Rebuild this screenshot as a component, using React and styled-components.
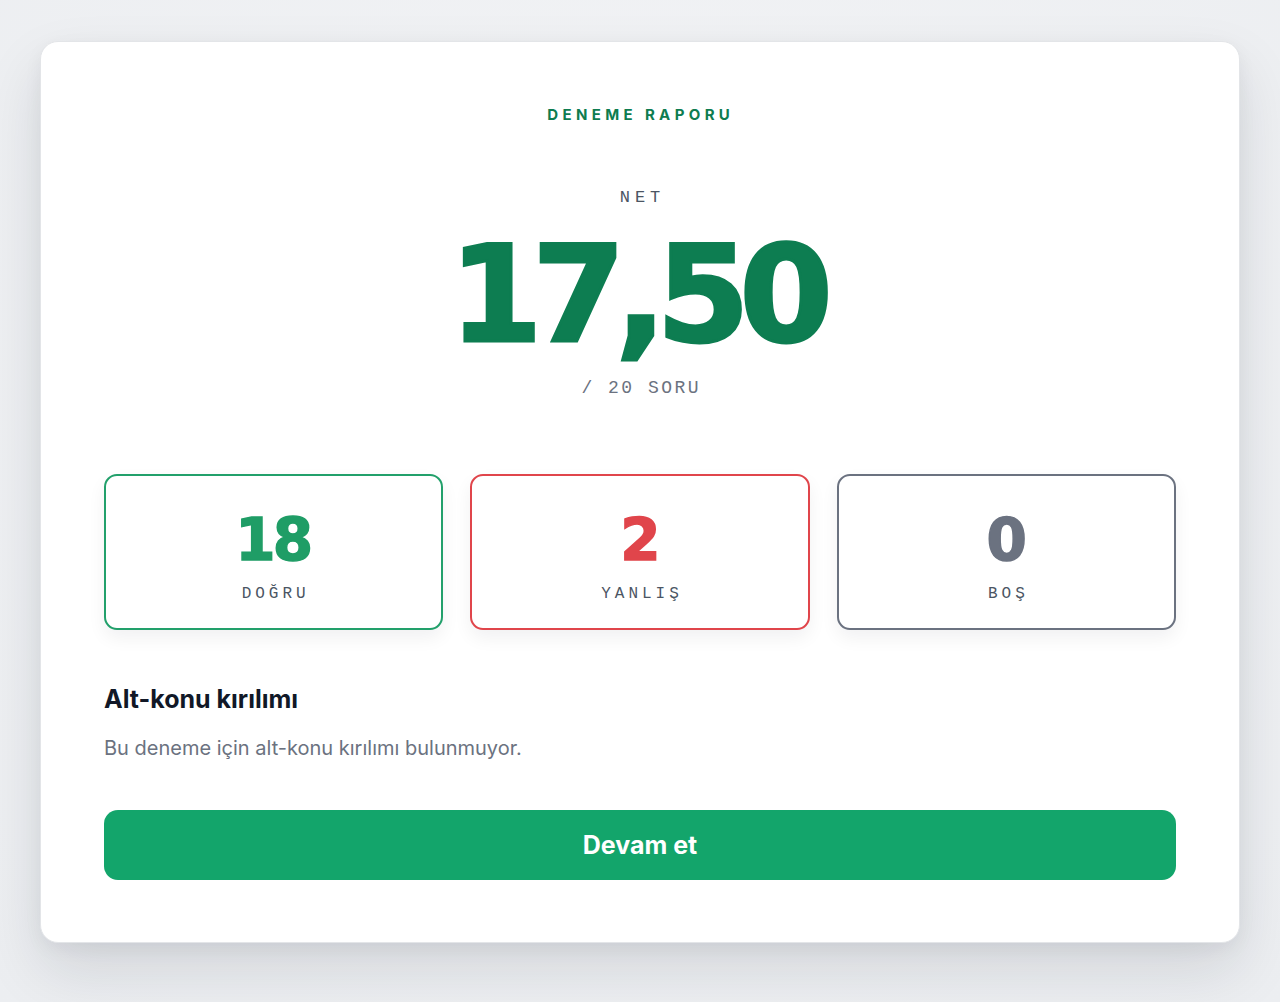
import styled, { createGlobalStyle } from 'styled-components';

const GlobalStyle = createGlobalStyle`
  html, body {
    margin: 0;
    padding: 0;
    background: #eef0f3;
    font-family: Inter, "Noto Sans", sans-serif;
  }
  * { box-sizing: border-box; }
`;

const Page = styled.div`
  min-height: 1002px;
  padding: 41px 40px 59px;
  background: radial-gradient(ellipse at 50% 40%, #f3f4f6 0%, #eceef1 100%);
`;

const Card = styled.div`
  background: #ffffff;
  border-radius: 18px;
  border: 1px solid #e3e5e8;
  box-shadow: 0 28px 60px rgba(17, 24, 39, 0.12), 0 6px 18px rgba(17, 24, 39, 0.05);
  padding: 63px 63px 62px;
  display: flex;
  flex-direction: column;
`;

const Eyebrow = styled.div`
  text-align: center;
  color: #0e7c50;
  font-size: 15px;
  line-height: 20px;
  font-weight: 700;
  letter-spacing: 0.29em;
  margin-right: -0.1em;
`;

const Hero = styled.div`
  display: flex;
  flex-direction: column;
  align-items: center;
  margin-top: 63px;
`;

const MonoLabel = styled.div`
  font-family: "Liberation Mono", "DejaVu Sans Mono", monospace;
  color: ${(p) => p.color || '#4b5563'};
  font-size: ${(p) => p.size || 16}px;
  line-height: ${(p) => p.lh || 20}px;
  letter-spacing: ${(p) => p.spacing || 4}px;
  margin-right: -${(p) => p.spacing || 4}px;
`;

const BigNet = styled.div`
  font-family: "DejaVu Sans", sans-serif;
  font-weight: 700;
  font-size: 134px;
  line-height: 134px;
  letter-spacing: -0.075em;
  margin-right: 8px;
  color: #0d7d51;
  -webkit-text-stroke: 3px #0d7d51;
  margin-top: 20px;
  margin-bottom: 14px;
`;

const Stats = styled.div`
  display: grid;
  grid-template-columns: repeat(3, 1fr);
  gap: 27px;
  margin-top: 74px;
`;

const StatBox = styled.div`
  height: 156px;
  border: 2.5px solid ${(p) => p.tone};
  border-radius: 13px;
  background: #fff;
  box-shadow: 0 8px 18px rgba(17, 24, 39, 0.06);
  display: flex;
  flex-direction: column;
  align-items: center;
  padding-top: 35px;
`;

const StatValue = styled.div`
  font-family: "DejaVu Sans", sans-serif;
  font-weight: 700;
  font-size: 58px;
  line-height: 58px;
  letter-spacing: -0.05em;
  margin-right: 2px;
  color: ${(p) => p.tone};
  -webkit-text-stroke: 1.5px ${(p) => p.tone};
  margin-bottom: 15px;
`;

const Section = styled.div`
  margin-top: 55px;
  display: flex;
  flex-direction: column;
  gap: 22px;
`;

const SectionTitle = styled.h2`
  margin: 0;
  font-size: 25px;
  line-height: 28px;
  font-weight: 700;
  color: #111827;
`;

const Muted = styled.p`
  margin: 0;
  font-size: 20px;
  line-height: 26px;
  color: #6b7280;
`;

const PrimaryButton = styled.button`
  margin-top: 49px;
  height: 70px;
  width: 100%;
  border: none;
  border-radius: 14px;
  background: #13a56b;
  color: #fff;
  font-family: Inter, sans-serif;
  font-size: 25px;
  font-weight: 700;
  cursor: pointer;
`;

const stats = [
  { value: '18', label: 'DOĞRU', border: '#22a06b', color: '#1f9d66' },
  { value: '2', label: 'YANLIŞ', border: '#e0454b', color: '#e0454b' },
  { value: '0', label: 'BOŞ', border: '#6b7280', color: '#6b7280' },
];

const App = () => {
  return (
    <Page>
      <GlobalStyle />
      <Card>
        <Eyebrow>DENEME RAPORU</Eyebrow>
        <Hero>
          <MonoLabel size={17} spacing={5}>NET</MonoLabel>
          <BigNet>17,50</BigNet>
          <MonoLabel size={18} lh={24} spacing={2.5} color="#6b7280">/ 20 SORU</MonoLabel>
        </Hero>
        <Stats>
          {stats.map((s) => (
            <StatBox key={s.label} tone={s.border}>
              <StatValue tone={s.color}>{s.value}</StatValue>
              <MonoLabel spacing={4}>{s.label}</MonoLabel>
            </StatBox>
          ))}
        </Stats>
        <Section>
          <SectionTitle>Alt-konu kırılımı</SectionTitle>
          <Muted>Bu deneme için alt-konu kırılımı bulunmuyor.</Muted>
        </Section>
        <PrimaryButton>Devam et</PrimaryButton>
      </Card>
    </Page>
  );
};

export default App;
